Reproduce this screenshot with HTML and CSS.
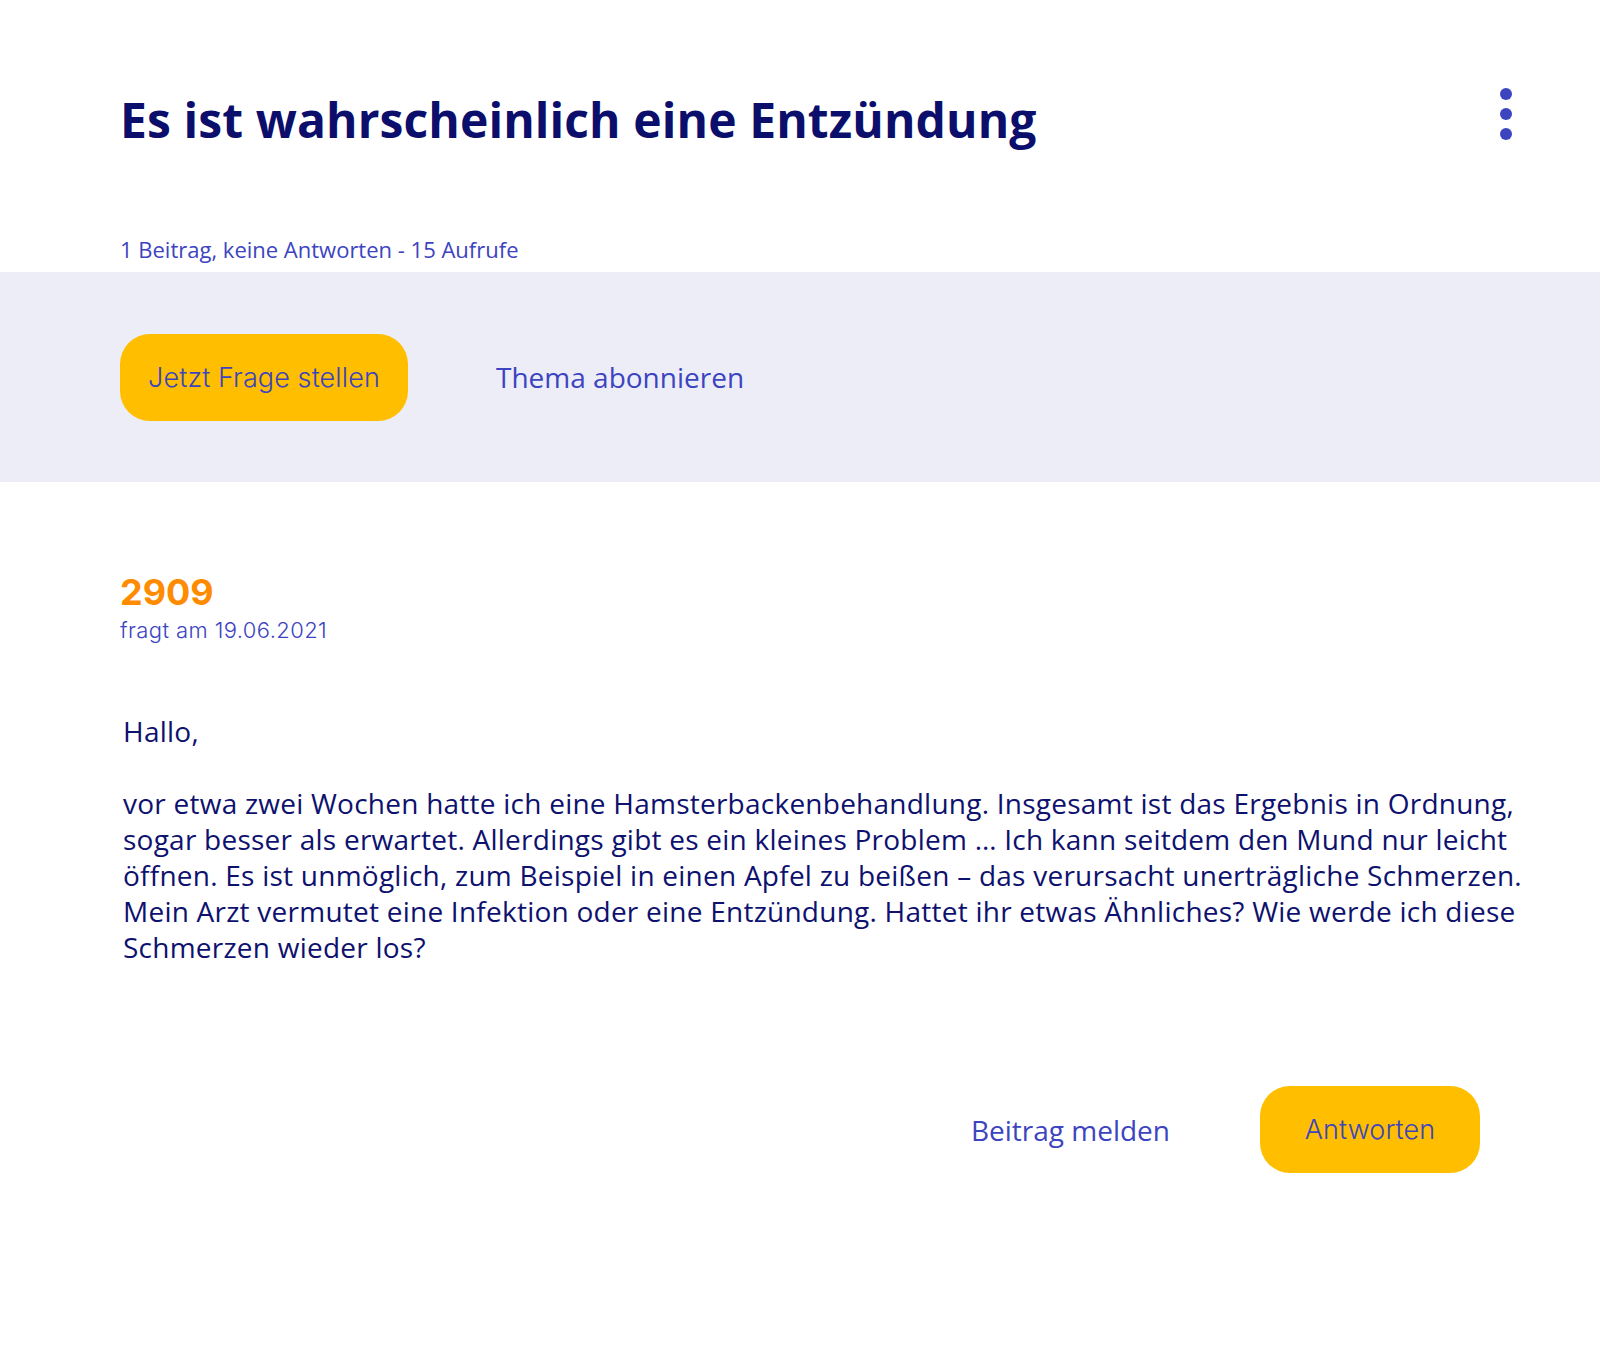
FILE: index.html
```html
<!DOCTYPE html>
<html lang="de">
<head>
<meta charset="utf-8">
<title>Es ist wahrscheinlich eine Entzündung</title>
<link rel="stylesheet" href="styles.css">
</head>
<body>
<header class="topic-head">
  <div class="title-row">
    <h1 class="title">Es ist wahrscheinlich eine Entzündung</h1>
    <button class="more" aria-label="Mehr">
      <svg width="12" height="52" viewBox="0 0 12 52" aria-hidden="true">
        <circle cx="6" cy="6" r="6"/>
        <circle cx="6" cy="26" r="6"/>
        <circle cx="6" cy="46" r="6"/>
      </svg>
    </button>
  </div>
  <p class="meta">1 Beitrag, keine Antworten - 15 Aufrufe</p>
</header>

<section class="actions-band">
  <a class="btn btn-ask" href="#">Jetzt Frage stellen</a>
  <a class="link link-subscribe" href="#">Thema abonnieren</a>
</section>

<article class="post">
  <div class="author">2909</div>
  <div class="date">fragt am 19.06.2021</div>
  <div class="post-body">
    <p>Hallo,</p>
    <p>vor etwa zwei Wochen hatte ich eine Hamsterbackenbehandlung. Insgesamt ist das Ergebnis in Ordnung, sogar besser als erwartet. Allerdings gibt es ein kleines Problem … Ich kann seitdem den Mund nur leicht öffnen. Es ist unmöglich, zum Beispiel in einen Apfel zu beißen – das verursacht unerträgliche Schmerzen. Mein Arzt vermutet eine Infektion oder eine Entzündung. Hattet ihr etwas Ähnliches? Wie werde ich diese Schmerzen wieder los?</p>
  </div>
  <div class="post-actions">
    <a class="link link-report" href="#">Beitrag melden</a>
    <a class="btn btn-reply" href="#">Antworten</a>
  </div>
</article>
</body>
</html>
```

FILE: styles.css
```css
* { box-sizing: border-box; }

html, body {
  margin: 0;
  padding: 0;
  background: #ffffff;
}

body {
  font-family: "Open Sans", "Liberation Sans", sans-serif;
  color: #0e116e;
}

a { text-decoration: none; }

.topic-head {
  padding: 90px 88px 0 120px;
}

.title-row {
  display: flex;
  justify-content: space-between;
  align-items: flex-start;
}

.title {
  margin: 0;
  font-size: 48px;
  line-height: 60px;
  font-weight: 700;
  letter-spacing: 0.1px;
  color: #0c0e6b;
}

.more {
  border: 0;
  padding: 0;
  margin: -2px 0 0;
  background: none;
  width: 12px;
  height: 52px;
  display: block;
}

.more svg {
  display: block;
  fill: #3c44bf;
}

.meta {
  margin: 84px 0 8px;
  font-size: 22px;
  line-height: 30px;
  color: #3c44bf;
}

.actions-band {
  background: #ededf8;
  height: 210px;
  padding-left: 120px;
  display: flex;
  align-items: center;
  gap: 88px;
}

.btn {
  display: inline-flex;
  align-items: center;
  justify-content: center;
  height: 87px;
  border-radius: 30px;
  background: #ffbf00;
  color: #3c44bf;
  font-family: "Inter", "Noto Sans", sans-serif;
  font-weight: 300;
  font-size: 27px;
  letter-spacing: 0.1px;
}

.btn-ask { width: 288px; }
.btn-reply { width: 220px; }

.link {
  color: #3c44bf;
  font-size: 28px;
  line-height: 36px;
}

.post {
  padding: 88px 0 0 120px;
}

.author {
  font-family: "Inter", "Noto Sans", sans-serif;
  font-weight: 700;
  font-size: 36px;
  line-height: 44px;
  color: #ff8c00;
}

.date {
  margin-top: 2px;
  font-family: "Inter", "Noto Sans", sans-serif;
  font-weight: 300;
  font-size: 22px;
  line-height: 28px;
  letter-spacing: 0.4px;
  color: #3c44bf;
}

.post-body {
  margin-top: 69px;
  padding-left: 3px;
  max-width: 1440px;
  font-size: 28px;
  line-height: 36px;
  letter-spacing: 0.24px;
  color: #0e116e;
}

.post-body p {
  margin: 0 0 36px;
}

.post-body p:last-child { margin-bottom: 0; }

.post-actions {
  margin-top: 121px;
  padding-right: 120px;
  display: flex;
  justify-content: flex-end;
  align-items: center;
  gap: 90px;
}
```
